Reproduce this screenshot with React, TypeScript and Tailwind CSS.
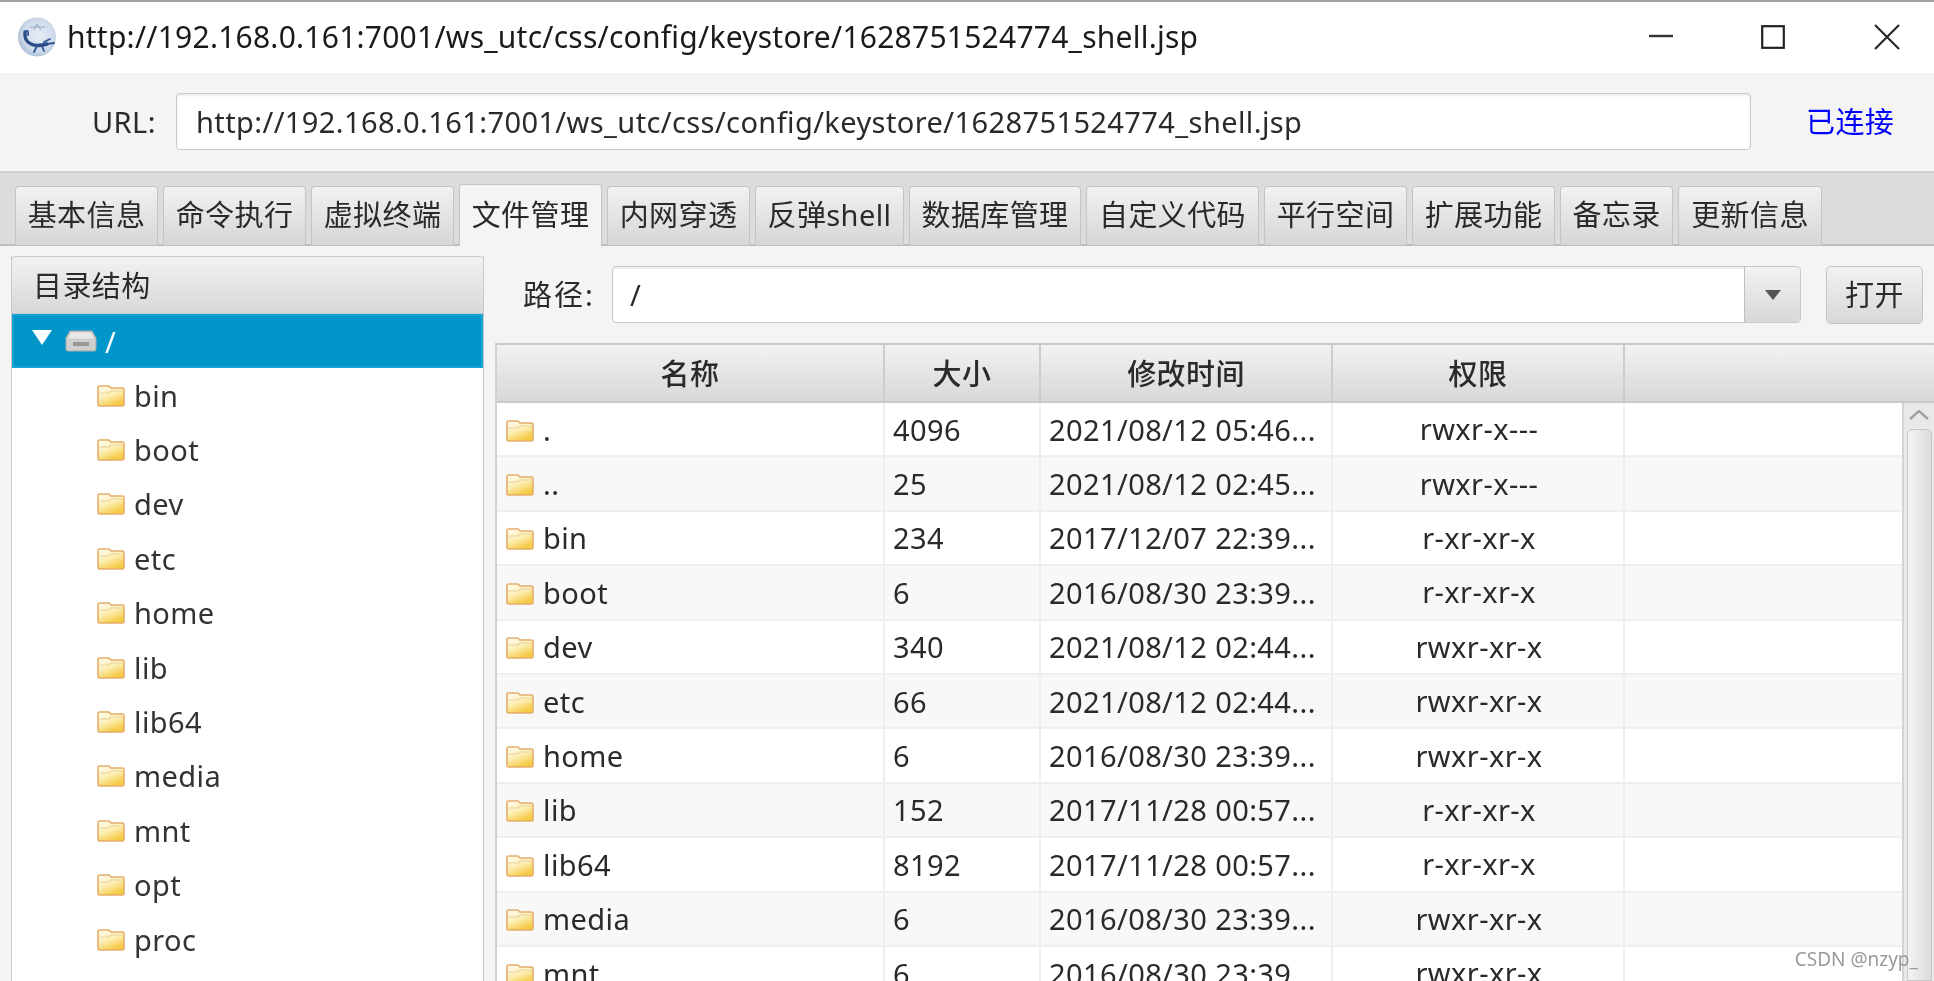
const FONT = "font-['Noto_Sans','Noto_Sans_CJK_SC',sans-serif]";

const tabs = [
  { label: "基本信息", w: "w-[143px]" },
  { label: "命令执行", w: "w-[143px]" },
  { label: "虚拟终端", w: "w-[143px]" },
  { label: "文件管理", w: "w-[143px]", active: true },
  { label: "内网穿透", w: "w-[143px]" },
  { label: "反弹shell", w: "w-[149px]" },
  { label: "数据库管理", w: "w-[172px]" },
  { label: "自定义代码", w: "w-[173px]" },
  { label: "平行空间", w: "w-[143px]" },
  { label: "扩展功能", w: "w-[143px]" },
  { label: "备忘录", w: "w-[113px]" },
  { label: "更新信息", w: "w-[144px]" },
];

const tree = ["bin", "boot", "dev", "etc", "home", "lib", "lib64", "media", "mnt", "opt", "proc"];

const rows = [
  [".", "4096", "2021/08/12 05:46...", "rwxr-x---"],
  ["..", "25", "2021/08/12 02:45...", "rwxr-x---"],
  ["bin", "234", "2017/12/07 22:39...", "r-xr-xr-x"],
  ["boot", "6", "2016/08/30 23:39...", "r-xr-xr-x"],
  ["dev", "340", "2021/08/12 02:44...", "rwxr-xr-x"],
  ["etc", "66", "2021/08/12 02:44...", "rwxr-xr-x"],
  ["home", "6", "2016/08/30 23:39...", "rwxr-xr-x"],
  ["lib", "152", "2017/11/28 00:57...", "r-xr-xr-x"],
  ["lib64", "8192", "2017/11/28 00:57...", "r-xr-xr-x"],
  ["media", "6", "2016/08/30 23:39...", "rwxr-xr-x"],
  ["mnt", "6", "2016/08/30 23:39...", "rwxr-xr-x"],
];

function Folder({ className = "" }: { className?: string }) {
  return (
    <svg width="28" height="22" viewBox="0 0 28 22" className={`shrink-0 ${className}`}>
      <defs>
        <linearGradient id="fg" x1="0" y1="0" x2="0.5" y2="1">
          <stop offset="0" stopColor="#fffdf2" />
          <stop offset="0.55" stopColor="#fdeeb4" />
          <stop offset="1" stopColor="#f4cb45" />
        </linearGradient>
      </defs>
      <path d="M1 2.5 Q1 1 2.5 1 H12 L14 3 H25.5 Q27 3 27 4.5 V19.5 Q27 21 25.5 21 H2.5 Q1 21 1 19.5 Z" fill="url(#fg)" stroke="#e5ad6c" strokeWidth="1.6" />
      <path d="M2.5 8 H12 L14 6 H25.5" fill="none" stroke="#ecd19a" strokeWidth="1.2" />
    </svg>
  );
}

function Drive() {
  return (
    <svg width="32" height="22" viewBox="0 0 32 22" className="shrink-0">
      <path d="M5 1 H27 L31 8 V19 Q31 21 29 21 H3 Q1 21 1 19 V8 Z" fill="#cfcfcd" stroke="#a9acac" strokeWidth="1" />
      <path d="M6 2.5 H26 L29 8.5 H3 Z" fill="#e8e8e6" />
      <rect x="8" y="12" width="16" height="4" fill="#96989a" />
    </svg>
  );
}

function Logo() {
  return (
    <svg width="40" height="40" viewBox="0 0 40 40" className="-mt-[1px]">
      <defs>
        <radialGradient id="lg" cx="0.55" cy="0.45" r="0.6">
          <stop offset="0" stopColor="#e9eef6" />
          <stop offset="0.7" stopColor="#ccd9ea" />
          <stop offset="1" stopColor="#a3b8d2" />
        </radialGradient>
      </defs>
      <ellipse cx="20" cy="20" rx="19" ry="19.5" fill="url(#lg)" />
      <path d="M8 15 Q7 24 14 27 Q20 30 30 27" fill="none" stroke="#2a4c86" strokeWidth="3.4" strokeLinecap="round" />
      <path d="M8 15 Q12 12 11 18 M20 29 L17 35 M25 29 L27 34 M30 27 L37 26 M27 25 L33 22" fill="none" stroke="#2f5594" strokeWidth="1.8" strokeLinecap="round" />
      <path d="M13 10 H28 M20 7 L17 13 M20 7 L24 13" fill="none" stroke="#93a8c6" strokeWidth="1" />
    </svg>
  );
}

export default function App() {
  return (
    <div className={`${FONT} relative h-[981px] w-[1934px] overflow-hidden bg-[#f4f4f4] text-[29px] leading-none tracking-[0.4px] text-[#2a2a2a] flex flex-col blur-[0.5px]`}>
      {/* title bar */}
      <div className="h-[73px] shrink-0 bg-white border-t-2 border-t-[#a0a0a0] flex items-center pl-[17px]">
        <Logo />
        <span className="ml-[10px] pb-[2px] text-[30px] tracking-[0.24px] text-[#1a1a1a]">http://192.168.0.161:7001/ws_utc/css/config/keystore/1628751524774_shell.jsp</span>
        <div className="ml-auto flex items-center pb-[2px]">
          <svg width="24" height="4" viewBox="0 0 24 4" className="mr-[88px] -mt-[2px]"><rect width="24" height="2.4" y="0.8" fill="#333" /></svg>
          <svg width="24" height="24" viewBox="0 0 24 24" className="mr-[89px]"><rect x="1.2" y="1.2" width="21.6" height="21.6" fill="none" stroke="#222" strokeWidth="2.2" /></svg>
          <svg width="26" height="26" viewBox="0 0 26 26" className="mr-[34px]"><path d="M1 1 L25 25 M25 1 L1 25" stroke="#222" strokeWidth="2" /></svg>
        </div>
      </div>

      {/* url bar */}
      <div className="h-[98px] shrink-0 flex items-center pl-[92px] pb-[2px]">
        <span className="w-[84px]">URL:</span>
        <div className="w-[1575px] h-[57px] bg-white border border-[#c8c8c8] rounded-[4px] shadow-[inset_0_2px_2px_#ececec] flex items-center pl-[19px]">
          http://192.168.0.161:7001/ws_utc/css/config/keystore/1628751524774_shell.jsp
        </div>
        <span className="ml-[55px] text-[#0000ff]">已连接</span>
      </div>

      {/* tabs */}
      <div className="h-[75px] shrink-0 bg-[#dcdcdc] border-t-2 border-t-[#cfcfcf] border-b-2 border-b-[#bdbdbd] flex items-end pl-[15px] gap-[5px]">
        {tabs.map((t) => (
          <div
            key={t.label}
            className={`${t.w} -mb-[2px] shrink-0 rounded-t-[4px] border border-[#c4c4c4] pb-[3px] flex items-center justify-center ${
              t.active
                ? "bg-[#f4f4f4] border-b-0 h-[62px]"
                : "h-[60px] bg-gradient-to-b from-[#f2f2f2] to-[#d6d6d6] border-b-[#bdbdbd]"
            }`}
          >
            {t.label}
          </div>
        ))}
      </div>

      {/* body */}
      <div className="flex-1 min-h-0 flex pl-[11px]">
        {/* left panel */}
        <div className="w-[473px] shrink-0 mt-[10px] border-x border-x-[#c8c8c8] flex flex-col bg-white">
          <div className="h-[58px] shrink-0 -mx-px bg-gradient-to-b from-[#f2f2f2] to-[#d8d8d8] border border-[#c8c8c8] rounded-t-[4px] flex items-center pl-[21px]">
            目录结构
          </div>
          <div className="h-[54px] shrink-0 bg-[#0096c9] border-2 border-[#16a4d4] flex items-center pl-[18px] text-white">
            <svg width="20" height="15" viewBox="0 0 20 15" className="-mt-[8px]"><path d="M0 0 H20 L10 15 Z" fill="#fff" /></svg>
            <span className="ml-[13px]"><Drive /></span>
            <span className="ml-[8px]">/</span>
          </div>
          {tree.map((n) => (
            <div key={n} className="h-[54.4px] shrink-0 flex items-center pl-[85px] gap-[9px]">
              <Folder className="mt-[1px]" />
              <span className="text-[#333]">{n}</span>
            </div>
          ))}
        </div>

        {/* right panel */}
        <div className="flex-1 min-w-0 ml-[11px] flex flex-col">
          <div className="h-[57px] mt-[20px] shrink-0 flex items-center">
            <span className="ml-[28px] w-[89px] tracking-[2px]">路径:</span>
            <div className="w-[1189px] h-[57px] bg-white border border-[#c8c8c8] rounded-[4px] shadow-[inset_0_2px_2px_#ececec] flex items-stretch">
              <span className="flex-1 flex items-center pl-[17px]">/</span>
              <div className="w-[56px] bg-gradient-to-b from-[#f2f2f2] to-[#d8d8d8] border-l border-l-[#c0c0c0] rounded-r-[4px] flex items-center justify-center">
                <svg width="16" height="10" viewBox="0 0 16 10"><path d="M0 0 H16 L8 10 Z" fill="#555" /></svg>
              </div>
            </div>
            <div className="ml-[25px] w-[97px] h-[58px] rounded-[5px] border border-[#c4c4c4] bg-gradient-to-b from-[#f2f2f2] to-[#d8d8d8] flex items-center justify-center">
              打开
            </div>
          </div>

          <div className="mt-[20px] flex-1 min-h-0 border-l-2 border-l-[#d0d0d0] flex flex-col bg-white">
            <div className="h-[60px] shrink-0 border-y-2 border-y-[#c9c9c9] bg-gradient-to-b from-[#f2f2f2] to-[#d8d8d8] grid grid-cols-[388px_156px_292px_292px_1fr] font-medium">
              {["名称", "大小", "修改时间", "权限", ""].map((h, i) => (
                <div key={i} className="flex items-center justify-center border-r-2 border-r-[#cdcdcd] last:border-r-0">{h}</div>
              ))}
            </div>
            <div className="flex-1 min-h-0 flex overflow-hidden">
              <div className="flex-1 min-w-0 flex flex-col">
                {rows.map((r, i) => (
                  <div
                    key={r[0]}
                    className={`h-[54.4px] shrink-0 border-b-2 border-b-[#efefef] grid grid-cols-[388px_156px_292px_292px_1fr] ${i % 2 ? "bg-[#f8f8f8]" : "bg-white"}`}
                  >
                    <div className="flex items-center pl-[9px] gap-[9px] border-r-2 border-r-[#efefef]">
                      <Folder className="mt-[3px]" />
                      <span>{r[0]}</span>
                    </div>
                    <div className="flex items-center pl-[8px] border-r-2 border-r-[#efefef]">{r[1]}</div>
                    <div className="flex items-center pl-[8px] border-r-2 border-r-[#efefef]">{r[2]}</div>
                    <div className="flex items-center justify-center pl-[2px] pb-[1px] border-r-2 border-r-[#efefef]">{r[3]}</div>
                    <div />
                  </div>
                ))}
              </div>
              <div className="w-[32px] shrink-0 bg-[#e9e9e9] border-l-2 border-l-[#d4d4d4] flex flex-col items-center">
                <svg width="20" height="12" viewBox="0 0 20 12" className="mt-[6px] shrink-0"><path d="M1 10 L10 2 L19 10" fill="none" stroke="#a0a0a0" strokeWidth="2.4" /></svg>
                <div className="mt-[8px] w-[25px] flex-1 rounded-t-[5px] border border-[#c8c8c8] bg-gradient-to-r from-[#f3f3f3] to-[#dcdcdc]" />
              </div>
            </div>
          </div>
        </div>
      </div>

      <span className="absolute right-[16px] bottom-[12px] text-[19px] leading-none tracking-normal text-[#9a9a9a]">CSDN @nzyp_</span>
    </div>
  );
}
